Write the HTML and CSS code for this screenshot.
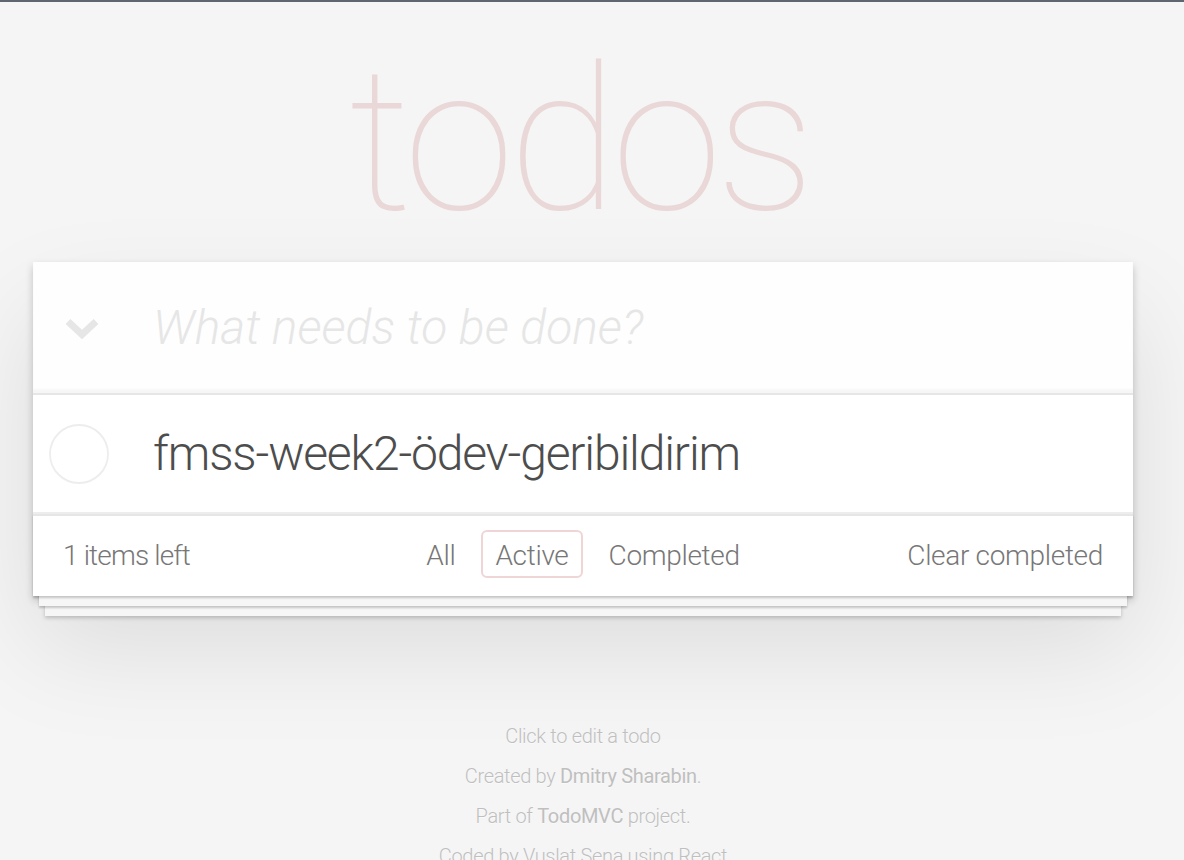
FILE: index.html
```html
<!DOCTYPE html>
<html lang="en">
<head>
<meta charset="utf-8">
<title>todos</title>
<link rel="stylesheet" href="styles.css">
</head>
<body>
<div class="page">
  <div class="hero">
    <h1 class="title">todos</h1>
  </div>
  <section class="todoapp">
    <header class="new-row">
      <div class="toggle-all">
        <svg width="34" height="22" viewBox="0 0 34 22"><polyline points="3,3.5 17,16.5 31,3.5" fill="none" stroke="#e6e6e6" stroke-width="7"/></svg>
      </div>
      <input class="new-todo" placeholder="What needs to be done?">
    </header>
    <ul class="todo-list">
      <li class="todo">
        <span class="toggle"><svg width="60" height="60" viewBox="0 0 60 60"><circle cx="30" cy="30" r="29" fill="none" stroke="#ededed" stroke-width="1.8"/></svg></span>
        <label class="todo-label">fmss-week2-ödev-geribildirim</label>
      </li>
    </ul>
    <footer class="footer">
      <span class="todo-count">1 items left</span>
      <ul class="filters">
        <li><a class="filter" href="#/">All</a></li>
        <li><a class="filter selected" href="#/active">Active</a></li>
        <li><a class="filter" href="#/completed">Completed</a></li>
      </ul>
      <span class="clear-completed">Clear completed</span>
    </footer>
  </section>
  <footer class="info">
    <p>Click to edit a todo</p>
    <p>Created by <a href="#">Dmitry Sharabin</a>.</p>
    <p>Part of <a href="#">TodoMVC</a> project.</p>
    <p>Coded by Vuslat Sena using React</p>
  </footer>
</div>
</body>
</html>
```

FILE: styles.css
```css
html, body {
  margin: 0;
  padding: 0;
}
body {
  background: #f5f5f5;
  border-top: 2px solid #5e6670;
  padding-right: 18px;
  font-family: Roboto, "Liberation Sans", Arial, sans-serif;
  font-weight: 300;
  letter-spacing: -0.02em;
  color: #4d4d4d;
  overflow: hidden;
}
.page {
  width: 1100px;
  margin: 0 auto;
}
.hero {
  height: 260px;
  padding-top: 39px;
  box-sizing: border-box;
}
.title {
  margin: 0;
  padding-right: 8px;
  font-size: 200px;
  line-height: 200px;
  font-weight: 100;
  letter-spacing: -0.03em;
  text-align: center;
  color: rgba(175, 47, 47, 0.15);
}
.todoapp {
  background: #fff;
  box-shadow: 0 4px 8px 0 rgba(0, 0, 0, 0.2), 0 50px 100px 0 rgba(0, 0, 0, 0.1);
}
.new-row {
  display: flex;
  align-items: center;
  height: 131px;
  background: rgba(0, 0, 0, 0.003);
  box-shadow: inset 0 -4px 2px rgba(0, 0, 0, 0.03);
}
.toggle-all {
  width: 120px;
  flex: none;
  display: flex;
  padding-left: 32px;
  box-sizing: border-box;
  padding-top: 2px;
}
.toggle-all svg {
  display: block;
}
.new-todo {
  flex: 1;
  border: 0;
  outline: none;
  background: transparent;
  font-family: inherit;
  font-size: 48px;
  font-weight: 300;
  letter-spacing: 0;
  color: #4d4d4d;
  padding: 0 32px 0 0;
  margin: 0;
  height: 67px;
}
.new-todo::placeholder {
  font-style: italic;
  font-weight: 300;
  color: #e6e6e6;
}
.todo-list {
  list-style: none;
  margin: 0;
  padding: 0;
  border-top: 2px solid #e6e6e6;
}
.todo {
  display: flex;
  align-items: center;
  height: 117px;
  border-bottom: 2px solid #ededed;
}
.toggle {
  flex: none;
  width: 60px;
  height: 60px;
  margin-left: 16px;
  margin-right: 44px;
}
.toggle svg {
  display: block;
}
.todo-label {
  font-size: 48px;
  line-height: 1.2;
  letter-spacing: -0.024em;
  color: #4d4d4d;
}
.footer {
  display: grid;
  grid-template-columns: 1fr auto 1fr;
  align-items: center;
  height: 80px;
  padding: 0 30px;
  border-top: 2px solid #e6e6e6;
  color: #777;
  font-size: 28px;
  line-height: 40px;
  box-shadow: 0 2px 2px rgba(0, 0, 0, 0.2), 0 16px 0 -6px #f6f6f6, 0 18px 2px -6px rgba(0, 0, 0, 0.2), 0 32px 0 -12px #f6f6f6, 0 34px 4px -12px rgba(0, 0, 0, 0.2);
}
.todo-count {
  justify-self: start;
  letter-spacing: -0.03em;
}
.filters {
  list-style: none;
  margin: 0 0 4px;
  padding: 0;
  display: flex;
}
.filter {
  display: inline-block;
  color: inherit;
  text-decoration: none;
  margin: 0 6px;
  padding: 6px 12px 2px;
  line-height: 36px;
  border: 2px solid transparent;
  border-radius: 6px;
}
.filter.selected {
  border-color: rgba(175, 47, 47, 0.2);
}
.clear-completed {
  justify-self: end;
}
.info {
  margin-top: 130px;
  color: #bfbfbf;
  font-size: 20px;
  text-align: center;
  text-shadow: 0 1px 0 rgba(255, 255, 255, 0.5);
}
.info p {
  margin: 20px 0;
  line-height: 1;
}
.info a {
  color: inherit;
  text-decoration: none;
  font-weight: 400;
}
```
